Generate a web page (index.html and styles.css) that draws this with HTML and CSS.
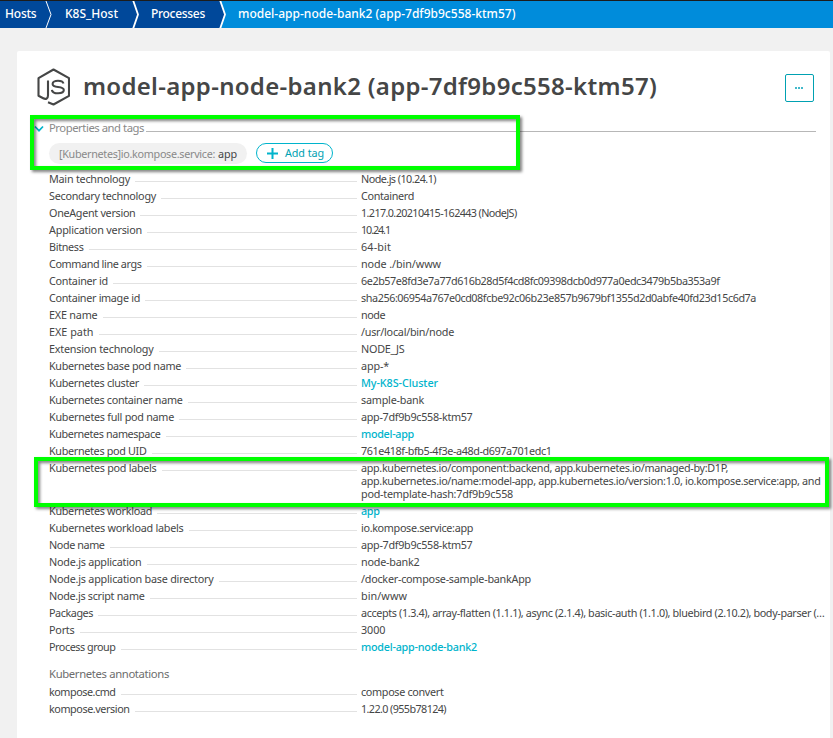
FILE: index.html
```html
<!DOCTYPE html>
<html lang="en">
<head>
<meta charset="utf-8">
<title>model-app-node-bank2</title>
<link rel="stylesheet" href="styles.css">
</head>
<body>
<nav class="crumbs">
  <a class="crumb crumb-hosts"><span data-w="31.500">Hosts</span></a>
  <svg class="sep thin" viewBox="0 0 8 27"><path class="line" d="M1 0L6 13.5L1 27"/></svg>
  <a class="crumb crumb-host"><span data-w="53">K8S_Host</span></a>
  <svg class="sep" viewBox="0 0 8 27"><path class="line" d="M1 -1L6 13.5L1 28"/></svg>
  <a class="crumb crumb-proc"><span data-w="54">Processes</span></a>
  <svg class="sep last" viewBox="0 0 8 27"><path class="fill-dark" d="M0 0H1L6 13.5L1 27H0Z"/><path class="line" d="M1 -1L6 13.5L1 28"/></svg>
  <a class="crumb crumb-current"><span data-w="277.500">model-app-node-bank2 (app-7df9b9c558-ktm57)</span></a>
</nav>
<main class="card">
  <header class="head">
    <svg class="logo" viewBox="0 0 34 38"><path d="M12 34.3L17.500 36.500L33 27.800V10.200L17.500 1.500L2.500 10.200V27.800L7.200 30.300C10 31.800 12 30.300 12 27.500V12.500"/><path d="M27.500 15.500C26.800 13.400 24.500 12.800 22 12.800C18.800 12.800 16.600 13.800 16.600 15.900C16.600 18.200 18.500 18.600 22 19C25.600 19.400 27.800 20 27.800 22.100C27.800 24.600 25.500 25.300 22.100 25.300C18.500 25.300 16.200 24.500 15.900 21.800"/></svg>
    <h1 class="title"><span data-w="574">model-app-node-bank2 (app-7df9b9c558-ktm57)</span></h1>
    <button class="more"><i></i><i></i><i></i></button>
  </header>
  <section class="tags-block">
    <div class="section-title">
      <svg class="chev" viewBox="0 0 10 8"><path d="M1 1.500L5 5.700L9 1.500"/></svg>
      <span class="section-name" data-w="95">Properties and tags</span><span class="rule"></span>
    </div>
    <div class="tags">
      <span class="tag"><span class="tag-key" data-w="156">[Kubernetes]io.kompose.service:</span><span class="tag-val" data-w="19">app</span></span>
      <button class="add"><svg class="plus" viewBox="0 0 11 11"><path d="M5.500 0V11M0 5.500H11"/></svg><span class="add-text" data-w="39">Add tag</span></button>
    </div>
  </section>
  <dl class="props">
    <div class="row"><dt><span data-w="81">Main technology</span></dt><dd><span data-w="75">Node.js (10.24.1)</span></dd></div>
    <div class="row"><dt><span data-w="107">Secondary technology</span></dt><dd><span data-w="53">Containerd</span></dd></div>
    <div class="row"><dt><span data-w="86.500">OneAgent version</span></dt><dd><span data-w="155.500">1.217.0.20210415-162443 (NodeJS)</span></dd></div>
    <div class="row"><dt><span data-w="93">Application version</span></dt><dd><span data-w="29">10.24.1</span></dd></div>
    <div class="row"><dt><span data-w="34.500">Bitness</span></dt><dd><span data-w="30">64-bit</span></dd></div>
    <div class="row"><dt><span data-w="92.500">Command line args</span></dt><dd><span data-w="80">node ./bin/www</span></dd></div>
    <div class="row"><dt><span data-w="59">Container id</span></dt><dd><span data-w="358.500">6e2b57e8fd3e7a77d616b28d5f4cd8fc09398dcb0d977a0edc3479b5ba353a9f</span></dd></div>
    <div class="row"><dt><span data-w="91">Container image id</span></dt><dd><span data-w="395">sha256:06954a767e0cd08fcbe92c06b23e857b9679bf1355d2d0abfe40fd23d15c6d7a</span></dd></div>
    <div class="row"><dt><span data-w="48.500">EXE name</span></dt><dd><span data-w="24">node</span></dd></div>
    <div class="row"><dt><span data-w="44.500">EXE path</span></dt><dd><span data-w="93">/usr/local/bin/node</span></dd></div>
    <div class="row"><dt><span data-w="104.500">Extension technology</span></dt><dd><span data-w="43.500">NODE_JS</span></dd></div>
    <div class="row"><dt><span data-w="132">Kubernetes base pod name</span></dt><dd><span data-w="28">app-*</span></dd></div>
    <div class="row"><dt><span data-w="90">Kubernetes cluster</span></dt><dd class="link"><span data-w="77">My-K8S-Cluster</span></dd></div>
    <div class="row"><dt><span data-w="133.500">Kubernetes container name</span></dt><dd><span data-w="63">sample-bank</span></dd></div>
    <div class="row"><dt><span data-w="125">Kubernetes full pod name</span></dt><dd><span data-w="111.500">app-7df9b9c558-ktm57</span></dd></div>
    <div class="row"><dt><span data-w="111.500">Kubernetes namespace</span></dt><dd class="link"><span data-w="53">model-app</span></dd></div>
    <div class="row"><dt><span data-w="97.500">Kubernetes pod UID</span></dt><dd><span data-w="190.500">761e418f-bfb5-4f3e-a48d-d697a701edc1</span></dd></div>
    <div class="row"><dt><span data-w="107.500">Kubernetes pod labels</span></dt><dd><span data-w="367">app.kubernetes.io/component:backend, app.kubernetes.io/managed-by:D1P,</span><span data-w="459.500">app.kubernetes.io/name:model-app, app.kubernetes.io/version:1.0, io.kompose.service:app, and</span><span data-w="152">pod-template-hash:7df9b9c558</span></dd></div>
    <div class="row"><dt><span data-w="103">Kubernetes workload</span></dt><dd class="link"><span data-w="18.500">app</span></dd></div>
    <div class="row"><dt><span data-w="134.500">Kubernetes workload labels</span></dt><dd><span data-w="112">io.kompose.service:app</span></dd></div>
    <div class="row"><dt><span data-w="55.500">Node name</span></dt><dd><span data-w="111.500">app-7df9b9c558-ktm57</span></dd></div>
    <div class="row"><dt><span data-w="92.500">Node.js application</span></dt><dd><span data-w="58.500">node-bank2</span></dd></div>
    <div class="row"><dt><span data-w="164.500">Node.js application base directory</span></dt><dd><span data-w="170">/docker-compose-sample-bankApp</span></dd></div>
    <div class="row"><dt><span data-w="95.500">Node.js script name</span></dt><dd><span data-w="46">bin/www</span></dd></div>
    <div class="row"><dt><span data-w="44">Packages</span></dt><dd><span data-w="463.500">accepts (1.3.4), array-flatten (1.1.1), async (2.1.4), basic-auth (1.1.0), bluebird (2.10.2), body-parser (…</span></dd></div>
    <div class="row"><dt><span data-w="25.500">Ports</span></dt><dd><span data-w="24.500">3000</span></dd></div>
    <div class="row"><dt><span data-w="66.500">Process group</span></dt><dd class="link"><span data-w="116">model-app-node-bank2</span></dd></div>
  </dl>
  <h2 class="subhead"><span data-w="120">Kubernetes annotations</span></h2>
  <dl class="props">
    <div class="row"><dt><span data-w="66.500">kompose.cmd</span></dt><dd><span data-w="82.500">compose convert</span></dd></div>
    <div class="row"><dt><span data-w="80.500">kompose.version</span></dt><dd><span data-w="85">1.22.0 (955b78124)</span></dd></div>
  </dl>
</main>
<div class="mark mark-tags"></div>
<div class="mark mark-labels"></div>
<script src="tracking.js"></script>
</body>
</html>
```
FILE: tracking.js
```js
// Tracks each text so that it takes the measure given in data-w.
document.querySelectorAll('[data-w]').forEach(function (el) {
  var natural = el.getBoundingClientRect().width;
  var gap = (parseFloat(el.dataset.w) - natural) / el.textContent.length;
  el.style.letterSpacing = gap.toFixed(3) + 'px';
});
```
FILE: styles.css
```css
* { box-sizing: border-box; }
body { margin: 0; width: 833px; height: 738px; overflow: hidden; position: relative; background: #f1f1f1; color: #454646; font: 10.8px/13px "Noto Sans", "Open Sans", sans-serif; }
h1, h2, dl, dd { margin: 0; }
button { padding: 0; margin: 0; background: #fff; font: inherit; }

.crumbs { display: flex; height: 28px; border-top: 1px solid #1c1c1c; background: #008cdb; color: #fff; font-size: 12px; line-height: 26px; font-weight: 500; }
.crumb { background: #00489a; white-space: nowrap; flex: none; }
.crumb-hosts { width: 45px; padding-left: 5px; }
.crumb-host { width: 79px; padding-left: 12px; }
.crumb-proc { width: 79px; padding-left: 11px; }
.crumb-current { background: none; padding-left: 11px; }
.sep { width: 8px; height: 27px; flex: none; background: #00489a; }
.sep.last { background: #008cdb; }
.sep .line { fill: none; stroke: #fff; stroke-width: 1.8; }
.sep.thin .line { stroke-width: 1; }
.fill-dark { fill: #00489a; }

.card { width: 813px; height: 687px; margin: 23px 0 0 17px; background: #fff; border-radius: 2px 2px 0 0; }
.head { display: flex; height: 70px; padding: 17px 16px 0 19px; }
.logo { width: 34px; height: 38px; flex: none; fill: none; stroke: #454646; stroke-width: 2.1; stroke-linejoin: round; }
.title { margin-left: 13px; font-size: 24px; line-height: 36px; font-weight: 600; white-space: nowrap; }
.more { width: 29px; height: 28px; margin: 6px 0 0 auto; padding-right: 1px; border: 1px solid #00a1b2; border-radius: 2px; display: flex; align-items: center; justify-content: center; gap: 1px; }
.more i { width: 2px; height: 2px; background: #42b9ca; }

.section-title { display: flex; height: 14px; padding: 0 14px 0 17px; color: #898989; line-height: 14px; }
.section-name { font-size: 11.3px; white-space: nowrap; }
.chev { width: 10px; height: 8px; margin: 4px 5px 0 0; fill: none; stroke: #00b4cc; stroke-width: 1.7; }
.rule { flex: 1; height: 1px; margin: 10px 0 0 2px; background: #b7b7b7; }
.tags { display: flex; height: 21px; margin: 8px 0 0 32px; }
.tag { width: 198px; height: 21px; padding-left: 10px; border-radius: 11px; background: #f1f1f1; line-height: 21px; white-space: nowrap; }
.tag-key { color: #898989; }
.tag-val { margin-left: 3px; }
.add { display: flex; align-items: center; width: 77px; height: 20px; margin-left: 9px; padding-left: 10px; border: 1px solid #00b4cc; border-radius: 10px; color: #00a1b2; white-space: nowrap; }
.add-text { line-height: 16px; }
.plus { width: 11px; height: 11px; margin-right: 7px; stroke: #00b4cc; stroke-width: 2; flex: none; }

.props { padding: 0 5px 0 32px; }
.tags-block + .props { margin-top: 8px; }
.row { display: grid; grid-template-columns: 308px 1fr; column-gap: 4px; margin-bottom: 4px; white-space: nowrap; }
.row dt { display: flex; height: 13px; }
.row dt::after { content: ""; flex: 1; height: 1px; margin: 9px 0 0 5px; background: #e2e2e2; }
.row dd span { display: block; width: max-content; }
.link { color: #00b4cc; font-weight: 500; }
.subhead { margin: 14px 0 4px 32px; font-size: 11.3px; line-height: 14px; font-weight: 400; color: #6d6d6d; }

.mark { position: absolute; border: 4px solid #0f0; filter: drop-shadow(2px 2px 1.5px rgba(0,0,0,.5)); }
.mark-tags { left: 30px; top: 115px; width: 490px; height: 55px; }
.mark-labels { left: 34px; top: 457px; width: 795px; height: 50px; }
```
